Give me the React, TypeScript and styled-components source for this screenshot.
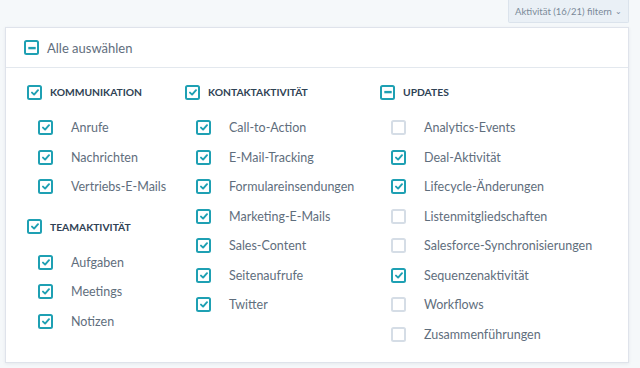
import React from 'react';
import styled, {createGlobalStyle} from 'styled-components';

const GlobalStyle = createGlobalStyle`
  html, body {
    margin: 0;
    padding: 0;
    background: #f5f8fa;
    font-family: Lato, "Open Sans", sans-serif;
  }
`;

const Page = styled.div`
  width: 640px;
  height: 368px;
  overflow: hidden;
  background: #f5f8fa;
`;

const TopBar = styled.div`
  height: 27px;
  display: flex;
  justify-content: flex-end;
  align-items: flex-start;
  padding-right: 11px;
`;

const FilterButton = styled.button`
  width: 121px;
  height: 23px;
  background: #eaf0f6;
  border: 1px solid #dbe3ec;
  border-top: none;
  border-radius: 0 0 2px 2px;
  color: #7a8a99;
  font-family: Lato, sans-serif;
  font-size: 9.5px;
  display: flex;
  align-items: center;
  justify-content: center;
  gap: 3px;
  padding: 0;
`;

const Chevron = styled.span`
  font-size: 8px;
  line-height: 1;
`;

const Panel = styled.div`
  margin-left: 5px;
  width: 624px;
  height: 336px;
  background: #fff;
  border: 1px solid #dfe3eb;
  box-shadow: 0 1px 3px rgba(45, 62, 80, 0.08);
  box-sizing: border-box;
`;

const PanelHeader = styled.div`
  height: 39px;
  display: flex;
  align-items: center;
  gap: 8px;
  padding-left: 18px;
  border-bottom: 1px solid #e3e8ee;
  color: #5f6e7d;
  font-size: 13px;
`;

const Columns = styled.div`
  display: grid;
  grid-template-columns: 158px 195px 1fr;
  padding: 14px 0 0 21px;
`;

const Column = styled.div`
  display: flex;
  flex-direction: column;
  gap: 15px;
`;

const Group = styled.div`
  display: flex;
  flex-direction: column;
`;

const GroupTitle = styled.div`
  height: 20px;
  display: flex;
  align-items: center;
  gap: 8px;
  color: #2f4254;
  font-size: 10.3px;
  font-weight: 700;
`;

const Items = styled.div`
  margin-top: 11px;
  padding-left: 11px;
  display: flex;
  flex-direction: column;
`;

const Item = styled.div`
  height: 29.5px;
  display: flex;
  align-items: center;
  gap: 18px;
  color: #5f6e7d;
  font-size: 12.5px;
`;

type BoxState = 'on' | 'off' | 'mixed';

const Box = styled.span<{$state: BoxState}>`
  width: 15px;
  height: 15px;
  box-sizing: border-box;
  flex: none;
  border: 2px solid ${p => (p.$state === 'off' ? '#d5dde6' : '#1ea0b3')};
  border-radius: 2.5px;
  background: #fff;
  display: flex;
  align-items: center;
  justify-content: center;
`;

const Check = ({state}: {state: BoxState}) => (
  <Box $state={state}>
    {state === 'on' && (
      <svg width="8" height="7" viewBox="0 0 8 7">
        <path d="M1 3.6 L3.1 5.6 L7 1.2" fill="none" stroke="#1ea0b3" strokeWidth="1.9"
              strokeLinecap="round" strokeLinejoin="round"/>
      </svg>
    )}
    {state === 'mixed' && (
      <svg width="8" height="8" viewBox="0 0 8 8">
        <rect x="0.3" y="2.9" width="7.4" height="2.4" fill="#1ea0b3"/>
      </svg>
    )}
  </Box>
);

type Entry = [string, boolean];
type GroupData = {title: string; state: BoxState; items: Entry[]};

const columns: GroupData[][] = [
  [
    {title: 'KOMMUNIKATION', state: 'on', items: [['Anrufe', true], ['Nachrichten', true], ['Vertriebs-E-Mails', true]]},
    {title: 'TEAMAKTIVITÄT', state: 'on', items: [['Aufgaben', true], ['Meetings', true], ['Notizen', true]]},
  ],
  [
    {
      title: 'KONTAKTAKTIVITÄT', state: 'on', items: [
        ['Call-to-Action', true], ['E-Mail-Tracking', true], ['Formulareinsendungen', true],
        ['Marketing-E-Mails', true], ['Sales-Content', true], ['Seitenaufrufe', true], ['Twitter', true],
      ],
    },
  ],
  [
    {
      title: 'UPDATES', state: 'mixed', items: [
        ['Analytics-Events', false], ['Deal-Aktivität', true], ['Lifecycle-Änderungen', true],
        ['Listenmitgliedschaften', false], ['Salesforce-Synchronisierungen', false],
        ['Sequenzenaktivität', true], ['Workflows', false], ['Zusammenführungen', false],
      ],
    },
  ],
];

function App() {
  return (
    <Page>
      <GlobalStyle />
      <TopBar>
        <FilterButton>
          Aktivität (16/21) filtern <Chevron>⌄</Chevron>
        </FilterButton>
      </TopBar>
      <Panel>
        <PanelHeader>
          <Check state="mixed" />
          Alle auswählen
        </PanelHeader>
        <Columns>
          {columns.map((groups, ci) => (
            <Column key={ci}>
              {groups.map(g => (
                <Group key={g.title}>
                  <GroupTitle>
                    <Check state={g.state} />
                    {g.title}
                  </GroupTitle>
                  <Items>
                    {g.items.map(([label, on]) => (
                      <Item key={label}>
                        <Check state={on ? 'on' : 'off'} />
                        {label}
                      </Item>
                    ))}
                  </Items>
                </Group>
              ))}
            </Column>
          ))}
        </Columns>
      </Panel>
    </Page>
  );
}

export default App;
